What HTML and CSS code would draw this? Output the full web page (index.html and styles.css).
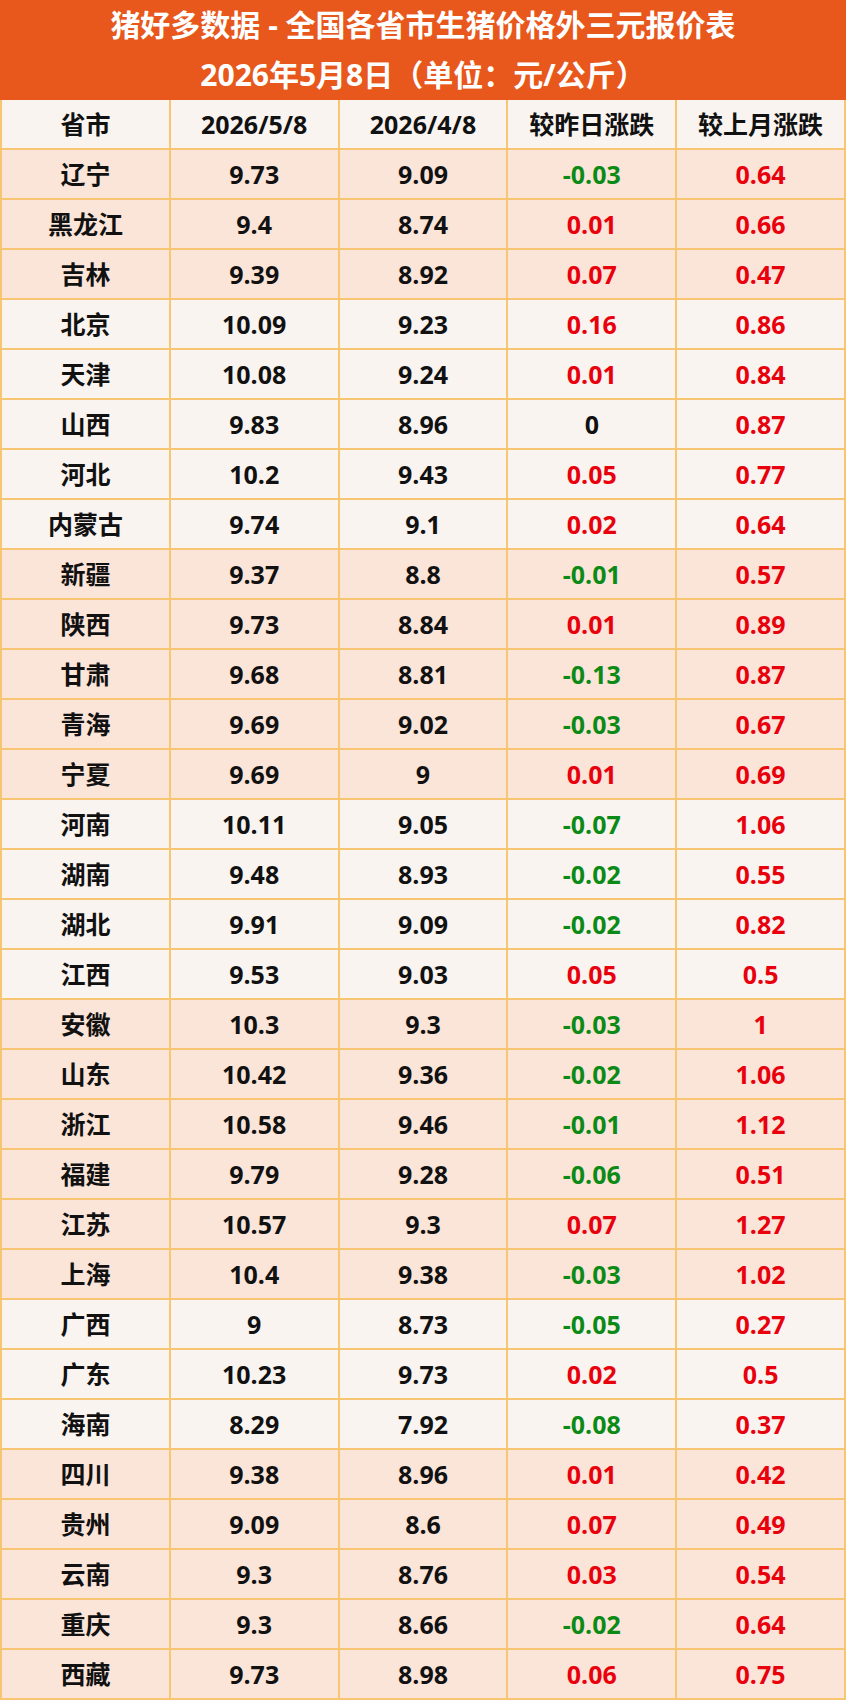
FILE: index.html
```html
<!DOCTYPE html>
<html lang="zh-CN">
<head>
<meta charset="utf-8">
<title>猪好多数据 - 全国各省市生猪价格外三元报价表</title>
<link rel="stylesheet" href="styles.css">
</head>
<body>
<div class="sheet">
  <div class="title">
    <div class="title-line">猪好多数据 - 全国各省市生猪价格外三元报价表</div>
    <div class="title-line">2026年5月8日（单位：元/公斤）</div>
  </div>
  <table class="grid">
    <colgroup><col><col><col><col><col></colgroup>
    <thead>
      <tr class="head"><th>省市</th><th>2026/5/8</th><th>2026/4/8</th><th>较昨日涨跌</th><th>较上月涨跌</th></tr>
    </thead>
    <tbody>
      <tr class="peach"><td>辽宁</td><td>9.73</td><td>9.09</td><td class="down">-0.03</td><td class="up">0.64</td></tr>
      <tr class="peach"><td>黑龙江</td><td>9.4</td><td>8.74</td><td class="up">0.01</td><td class="up">0.66</td></tr>
      <tr class="peach"><td>吉林</td><td>9.39</td><td>8.92</td><td class="up">0.07</td><td class="up">0.47</td></tr>
      <tr class="light"><td>北京</td><td>10.09</td><td>9.23</td><td class="up">0.16</td><td class="up">0.86</td></tr>
      <tr class="light"><td>天津</td><td>10.08</td><td>9.24</td><td class="up">0.01</td><td class="up">0.84</td></tr>
      <tr class="light"><td>山西</td><td>9.83</td><td>8.96</td><td>0</td><td class="up">0.87</td></tr>
      <tr class="light"><td>河北</td><td>10.2</td><td>9.43</td><td class="up">0.05</td><td class="up">0.77</td></tr>
      <tr class="light"><td>内蒙古</td><td>9.74</td><td>9.1</td><td class="up">0.02</td><td class="up">0.64</td></tr>
      <tr class="peach"><td>新疆</td><td>9.37</td><td>8.8</td><td class="down">-0.01</td><td class="up">0.57</td></tr>
      <tr class="peach"><td>陕西</td><td>9.73</td><td>8.84</td><td class="up">0.01</td><td class="up">0.89</td></tr>
      <tr class="peach"><td>甘肃</td><td>9.68</td><td>8.81</td><td class="down">-0.13</td><td class="up">0.87</td></tr>
      <tr class="peach"><td>青海</td><td>9.69</td><td>9.02</td><td class="down">-0.03</td><td class="up">0.67</td></tr>
      <tr class="peach"><td>宁夏</td><td>9.69</td><td>9</td><td class="up">0.01</td><td class="up">0.69</td></tr>
      <tr class="light"><td>河南</td><td>10.11</td><td>9.05</td><td class="down">-0.07</td><td class="up">1.06</td></tr>
      <tr class="light"><td>湖南</td><td>9.48</td><td>8.93</td><td class="down">-0.02</td><td class="up">0.55</td></tr>
      <tr class="light"><td>湖北</td><td>9.91</td><td>9.09</td><td class="down">-0.02</td><td class="up">0.82</td></tr>
      <tr class="light"><td>江西</td><td>9.53</td><td>9.03</td><td class="up">0.05</td><td class="up">0.5</td></tr>
      <tr class="peach"><td>安徽</td><td>10.3</td><td>9.3</td><td class="down">-0.03</td><td class="up">1</td></tr>
      <tr class="peach"><td>山东</td><td>10.42</td><td>9.36</td><td class="down">-0.02</td><td class="up">1.06</td></tr>
      <tr class="peach"><td>浙江</td><td>10.58</td><td>9.46</td><td class="down">-0.01</td><td class="up">1.12</td></tr>
      <tr class="peach"><td>福建</td><td>9.79</td><td>9.28</td><td class="down">-0.06</td><td class="up">0.51</td></tr>
      <tr class="peach"><td>江苏</td><td>10.57</td><td>9.3</td><td class="up">0.07</td><td class="up">1.27</td></tr>
      <tr class="peach"><td>上海</td><td>10.4</td><td>9.38</td><td class="down">-0.03</td><td class="up">1.02</td></tr>
      <tr class="light"><td>广西</td><td>9</td><td>8.73</td><td class="down">-0.05</td><td class="up">0.27</td></tr>
      <tr class="light"><td>广东</td><td>10.23</td><td>9.73</td><td class="up">0.02</td><td class="up">0.5</td></tr>
      <tr class="light"><td>海南</td><td>8.29</td><td>7.92</td><td class="down">-0.08</td><td class="up">0.37</td></tr>
      <tr class="peach"><td>四川</td><td>9.38</td><td>8.96</td><td class="up">0.01</td><td class="up">0.42</td></tr>
      <tr class="peach"><td>贵州</td><td>9.09</td><td>8.6</td><td class="up">0.07</td><td class="up">0.49</td></tr>
      <tr class="peach"><td>云南</td><td>9.3</td><td>8.76</td><td class="up">0.03</td><td class="up">0.54</td></tr>
      <tr class="peach"><td>重庆</td><td>9.3</td><td>8.66</td><td class="down">-0.02</td><td class="up">0.64</td></tr>
      <tr class="peach"><td>西藏</td><td>9.73</td><td>8.98</td><td class="up">0.06</td><td class="up">0.75</td></tr>
    </tbody>
  </table>
</div>
</body>
</html>
```

FILE: styles.css
```css
html, body {
  margin: 0;
  padding: 0;
  background: #ffffff;
}

.sheet {
  width: 846px;
  font-family: "Open Sans", "Noto Sans CJK SC", sans-serif;
  font-weight: 700;
  color: #111111;
}

.title {
  background: #e8571b;
  color: #ffffff;
  height: 100px;
  text-align: center;
  font-size: 30px;
}

.title-line {
  height: 50px;
  line-height: 50px;
}

.grid {
  width: 846px;
  border-collapse: collapse;
  table-layout: fixed;
}

.grid col {
  width: 20%;
}

.grid th,
.grid td {
  border: 2px solid #f8c673;
  height: 48px;
  padding: 0;
  text-align: center;
  vertical-align: middle;
  font-weight: 700;
  font-size: 25px;
  line-height: 1;
}

.grid th {
  font-size: 25px;
  background: #f9f4f0;
}

.grid tr:first-child th {
  border-top: 0;
}

.peach td {
  background: #fbe4d8;
}

.light td {
  background: #f9f4f0;
}

.up {
  color: #e8000d;
}

.down {
  color: #0b8a16;
}
```
